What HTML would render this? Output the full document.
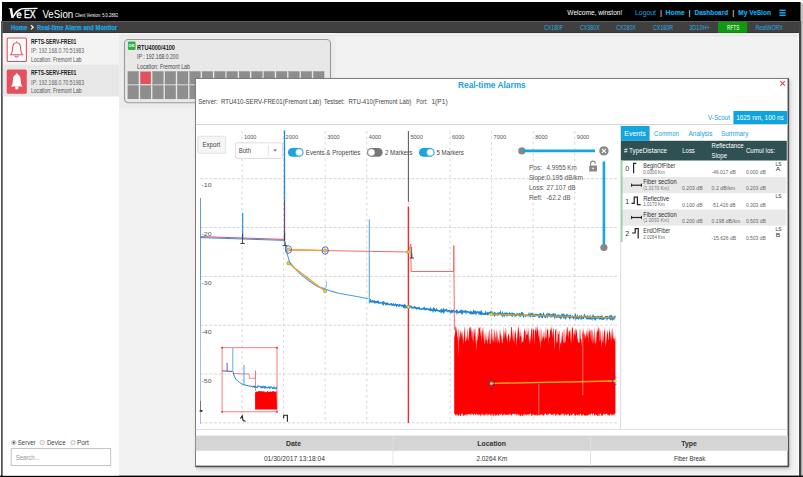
<!DOCTYPE html>
<html><head><meta charset="utf-8"><style>
html,body{margin:0;padding:0;width:803px;height:477px;overflow:hidden;background:#fff}
svg{display:block}
text{font-family:"Liberation Sans", sans-serif}
</style></head><body>
<svg width="803" height="477" viewBox="0 0 803 477">
<defs><filter id="blur" x="-5%" y="-5%" width="110%" height="110%"><feGaussianBlur stdDeviation="2"/></filter></defs>
<rect x="0" y="0" width="803" height="477" fill="#ffffff" />
<rect x="801" y="3" width="2" height="474" fill="#c4c4c4" />
<rect x="2" y="2" width="798" height="474" fill="#f2f2f2" />
<rect x="2" y="2" width="798.6" height="19.5" fill="#000000" />
<rect x="2" y="21.5" width="798" height="11.7" fill="#404040" />
<rect x="2" y="32.2" width="798" height="1" fill="#353535" />
<rect x="1" y="21" width="2" height="455" fill="#575757" />
<rect x="798" y="33" width="1" height="443" fill="#ffffff" />
<rect x="799" y="21" width="2.2" height="455" fill="#444444" />
<rect x="0" y="475.6" width="803" height="1.4" fill="#000000" />
<path d="M8.3,8.2 L12.4,8.2 L12.3,9.0 L13.2,15.4 C15.2,11.6 17.8,8.4 23.5,7.9 L37.6,7.7 L37.6,8.9 L23.6,9.2 C18.8,9.8 15.8,13.6 13.4,18.0 L11.4,18.0 L9.7,9.2 Z" stroke="none" stroke-width="1" fill="#fff" />
<path d="M17.3,15.2 L21.1,15.2 C21.1,13.7 20.3,12.9 19.1,12.9 C17.9,12.9 17.1,14 17.1,15.3 C17.1,16.7 18,17.6 19.2,17.6 C20,17.6 20.6,17.3 21,16.8" stroke="#fff" stroke-width="1.2" fill="none" />
<text x="23.9" y="17.92" font-size="10.6" fill="#fff" textLength="11.6" lengthAdjust="spacingAndGlyphs" stroke="#fff" stroke-width="0.35">EX</text>
<text x="42.4" y="17.82" font-size="10.6" fill="#fff" textLength="30.8" lengthAdjust="spacingAndGlyphs" >VeSion</text>
<text x="75" y="16.66" font-size="4.6" fill="#fff" textLength="43" lengthAdjust="spacingAndGlyphs" >Client Version: 5.0.2882</text>
<text x="11" y="30.04" font-size="7.6" fill="#1aa6e4" font-weight="bold" textLength="16.4" lengthAdjust="spacingAndGlyphs" stroke="#1aa6e4" stroke-width="0.25">Home</text>
<path d="M31,25.2 L33.2,27.3 L31,29.4" stroke="#f0f0f0" stroke-width="1.3" fill="none" />
<text x="37.1" y="30.04" font-size="7.6" fill="#1aa6e4" font-weight="bold" textLength="80" lengthAdjust="spacingAndGlyphs" stroke="#1aa6e4" stroke-width="0.25">Real-time Alarm and Monitor</text>
<text x="567.3" y="15.41" font-size="7.8" fill="#fff" textLength="55" lengthAdjust="spacingAndGlyphs" >Welcome, winston!</text>
<text x="635" y="15.41" font-size="7.8" fill="#1aa8e6" textLength="21" lengthAdjust="spacingAndGlyphs" >Logout</text>
<text x="660.0" y="15.41" font-size="7.8" fill="#fff" >|</text>
<text x="665.5" y="15.41" font-size="7.8" fill="#1aa8e6" font-weight="bold" textLength="19.2" lengthAdjust="spacingAndGlyphs" stroke="#1aa8e6" stroke-width="0.2">Home</text>
<text x="688.6" y="15.41" font-size="7.8" fill="#fff" >|</text>
<text x="694.6" y="15.41" font-size="7.8" fill="#1aa8e6" font-weight="bold" textLength="33.5" lengthAdjust="spacingAndGlyphs" stroke="#1aa8e6" stroke-width="0.2">Dashboard</text>
<text x="732.2" y="15.41" font-size="7.8" fill="#fff" >|</text>
<text x="738.3" y="15.41" font-size="7.8" fill="#1aa8e6" font-weight="bold" textLength="32.6" lengthAdjust="spacingAndGlyphs" stroke="#1aa8e6" stroke-width="0.2">My VeSion</text>
<rect x="779.4" y="9.6" width="6.2" height="1.5" fill="#1aa8e6" />
<rect x="779.4" y="12.1" width="6.2" height="1.5" fill="#1aa8e6" />
<rect x="779.4" y="14.6" width="6.2" height="1.5" fill="#1aa8e6" />
<rect x="718" y="21.8" width="29.2" height="11" fill="#119a11" />
<text x="544" y="30.12" font-size="7.0" fill="#2aaae2" textLength="19.1" lengthAdjust="spacingAndGlyphs" >CX180F</text>
<text x="580" y="30.12" font-size="7.0" fill="#2aaae2" textLength="19.7" lengthAdjust="spacingAndGlyphs" >CX380X</text>
<text x="616.3" y="30.12" font-size="7.0" fill="#2aaae2" textLength="19.5" lengthAdjust="spacingAndGlyphs" >CX280X</text>
<text x="652.9" y="30.12" font-size="7.0" fill="#2aaae2" textLength="20.2" lengthAdjust="spacingAndGlyphs" >CX180R</text>
<text x="689.3" y="30.12" font-size="7.0" fill="#2aaae2" textLength="20.4" lengthAdjust="spacingAndGlyphs" >3D10H+</text>
<text x="727.1" y="30.12" font-size="7.0" fill="#fff" textLength="12.2" lengthAdjust="spacingAndGlyphs" >RFTS</text>
<text x="755.5" y="30.12" font-size="7.0" fill="#2aaae2" textLength="27.4" lengthAdjust="spacingAndGlyphs" >RealWORX</text>
<rect x="2.8" y="33" width="116.2" height="442.6" fill="#ffffff" />
<rect x="2.8" y="33" width="116.2" height="31.5" fill="#f3f3f3" />
<rect x="2.8" y="64.5" width="116.2" height="32" fill="#e7e7e7" />
<rect x="7.2" y="38" width="19.2" height="23.5" fill="#fff" stroke="#e3505e" stroke-width="1.1" rx="1" />
<rect x="6.7" y="69.4" width="20.1" height="24.4" fill="#e3505e" rx="1.5" />
<path d="M10.600000000000001,54.8 L22.6,54.8 C21.0,53.199999999999996 20.6,51.4 20.6,48.599999999999994 C20.6,44.8 18.8,42.8 16.6,42.8 C14.400000000000002,42.8 12.600000000000001,44.8 12.600000000000001,48.599999999999994 C12.600000000000001,51.4 12.200000000000001,53.199999999999996 10.600000000000001,54.8 Z" stroke="#e3505e" stroke-width="1.1" fill="none" />
<path d="M15.000000000000002,55.4 a1.6,1.6 0 0,0 3.2,0" stroke="#e3505e" stroke-width="1.1" fill="none" />
<line x1="16.6" y1="42.8" x2="16.6" y2="41.5" stroke="#e3505e" stroke-width="1.1" />
<path d="M10.8,86.6 L22.8,86.6 C21.200000000000003,85.0 20.8,83.19999999999999 20.8,80.39999999999999 C20.8,76.6 19.0,74.6 16.8,74.6 C14.600000000000001,74.6 12.8,76.6 12.8,80.39999999999999 C12.8,83.19999999999999 12.4,85.0 10.8,86.6 Z" stroke="none" stroke-width="1" fill="#fff" />
<circle cx="16.8" cy="87.89999999999999" r="1.7" fill="#fff" />
<circle cx="16.8" cy="74.3" r="1.0" fill="#fff" />
<text x="31" y="43.78" font-size="6.6" fill="#222" font-weight="bold" textLength="45.3" lengthAdjust="spacingAndGlyphs" >RFTS-SERV-FRE01</text>
<text x="31" y="53.27" font-size="6.3" fill="#666" textLength="53" lengthAdjust="spacingAndGlyphs" >IP: 192.168.0.70:51983</text>
<text x="31" y="62.17" font-size="6.3" fill="#555" textLength="50.5" lengthAdjust="spacingAndGlyphs" >Location: Fremont Lab</text>
<text x="31" y="75.18" font-size="6.6" fill="#222" font-weight="bold" textLength="45.3" lengthAdjust="spacingAndGlyphs" >RFTS-SERV-FRE01</text>
<text x="31" y="84.77" font-size="6.3" fill="#666" textLength="53" lengthAdjust="spacingAndGlyphs" >IP: 192.168.0.70:51983</text>
<text x="31" y="93.47" font-size="6.3" fill="#555" textLength="50.5" lengthAdjust="spacingAndGlyphs" >Location: Fremont Lab</text>
<circle cx="13.8" cy="442.6" r="2.2" fill="#f4f4f4" stroke="#aaa" stroke-width="0.7" />
<text x="17.8" y="444.98" font-size="6.6" fill="#444" textLength="17.8" lengthAdjust="spacingAndGlyphs" >Server</text>
<circle cx="42.2" cy="442.6" r="2.2" fill="#f4f4f4" stroke="#aaa" stroke-width="0.7" />
<text x="47" y="444.98" font-size="6.6" fill="#444" textLength="18.5" lengthAdjust="spacingAndGlyphs" >Device</text>
<circle cx="72.9" cy="442.6" r="2.2" fill="#f4f4f4" stroke="#aaa" stroke-width="0.7" />
<text x="76.9" y="444.98" font-size="6.6" fill="#444" textLength="11.8" lengthAdjust="spacingAndGlyphs" >Port</text>
<circle cx="13.8" cy="442.6" r="1.1" fill="#444" />
<rect x="11.2" y="448.6" width="99.5" height="16.9" fill="#fff" stroke="#bdbdbd" stroke-width="0.9" />
<text x="15.7" y="459.65" font-size="6.8" fill="#999" textLength="24" lengthAdjust="spacingAndGlyphs" >Search...</text>
<rect x="119" y="33" width="216.4" height="75.5" fill="#ececec" />
<rect x="119" y="33.2" width="680" height="1.3" fill="#f7f7f7" />
<rect x="119" y="34.8" width="680" height="1.6" fill="#e7e7e7" />
<rect x="124.5" y="39.5" width="206" height="63.2" fill="#e8e8e8" stroke="#999999" stroke-width="1.1" rx="4" />
<rect x="127.9" y="41.5" width="7.7" height="8.5" fill="#2db24a" rx="1.2" />
<text x="128.6" y="47.31" font-size="4.2" fill="#fff" font-weight="bold" textLength="6" lengthAdjust="spacingAndGlyphs" >OK</text>
<text x="137" y="49.58" font-size="6.6" fill="#222" font-weight="bold" textLength="38" lengthAdjust="spacingAndGlyphs" >RTU4000/4100</text>
<text x="137" y="59.47" font-size="6.3" fill="#484848" textLength="41.5" lengthAdjust="spacingAndGlyphs" >IP : 192.168.0.200</text>
<text x="137" y="68.67" font-size="6.3" fill="#484848" textLength="53" lengthAdjust="spacingAndGlyphs" >Location: Fremont Lab</text>
<rect x="127.9" y="71.5" width="10.6" height="12.6" fill="#8e8e8e" stroke="#7a7a7a" stroke-width="0.3" />
<rect x="140.27" y="71.5" width="10.6" height="12.6" fill="#e3505e" />
<rect x="152.64" y="71.5" width="10.6" height="12.6" fill="#8e8e8e" stroke="#7a7a7a" stroke-width="0.3" />
<rect x="165.01" y="71.5" width="10.6" height="12.6" fill="#8e8e8e" stroke="#7a7a7a" stroke-width="0.3" />
<rect x="177.38" y="71.5" width="10.6" height="12.6" fill="#8e8e8e" stroke="#7a7a7a" stroke-width="0.3" />
<rect x="189.75" y="71.5" width="10.6" height="12.6" fill="#8e8e8e" stroke="#7a7a7a" stroke-width="0.3" />
<rect x="202.12" y="71.5" width="10.6" height="12.6" fill="#8e8e8e" stroke="#7a7a7a" stroke-width="0.3" />
<rect x="214.49" y="71.5" width="10.6" height="12.6" fill="#8e8e8e" stroke="#7a7a7a" stroke-width="0.3" />
<rect x="226.86" y="71.5" width="10.6" height="12.6" fill="#8e8e8e" stroke="#7a7a7a" stroke-width="0.3" />
<rect x="239.23" y="71.5" width="10.6" height="12.6" fill="#8e8e8e" stroke="#7a7a7a" stroke-width="0.3" />
<rect x="251.6" y="71.5" width="10.6" height="12.6" fill="#8e8e8e" stroke="#7a7a7a" stroke-width="0.3" />
<rect x="263.97" y="71.5" width="10.6" height="12.6" fill="#8e8e8e" stroke="#7a7a7a" stroke-width="0.3" />
<rect x="276.34" y="71.5" width="10.6" height="12.6" fill="#8e8e8e" stroke="#7a7a7a" stroke-width="0.3" />
<rect x="288.71" y="71.5" width="10.6" height="12.6" fill="#8e8e8e" stroke="#7a7a7a" stroke-width="0.3" />
<rect x="301.08" y="71.5" width="10.6" height="12.6" fill="#8e8e8e" stroke="#7a7a7a" stroke-width="0.3" />
<rect x="313.45" y="71.5" width="10.6" height="12.6" fill="#8e8e8e" stroke="#7a7a7a" stroke-width="0.3" />
<rect x="127.9" y="85.5" width="10.6" height="13.4" fill="#8e8e8e" stroke="#7a7a7a" stroke-width="0.3" />
<rect x="140.27" y="85.5" width="10.6" height="13.4" fill="#8e8e8e" stroke="#7a7a7a" stroke-width="0.3" />
<rect x="152.64" y="85.5" width="10.6" height="13.4" fill="#8e8e8e" stroke="#7a7a7a" stroke-width="0.3" />
<rect x="165.01" y="85.5" width="10.6" height="13.4" fill="#8e8e8e" stroke="#7a7a7a" stroke-width="0.3" />
<rect x="177.38" y="85.5" width="10.6" height="13.4" fill="#8e8e8e" stroke="#7a7a7a" stroke-width="0.3" />
<rect x="189.75" y="85.5" width="10.6" height="13.4" fill="#8e8e8e" stroke="#7a7a7a" stroke-width="0.3" />
<rect x="202.12" y="85.5" width="10.6" height="13.4" fill="#8e8e8e" stroke="#7a7a7a" stroke-width="0.3" />
<rect x="214.49" y="85.5" width="10.6" height="13.4" fill="#8e8e8e" stroke="#7a7a7a" stroke-width="0.3" />
<rect x="226.86" y="85.5" width="10.6" height="13.4" fill="#8e8e8e" stroke="#7a7a7a" stroke-width="0.3" />
<rect x="239.23" y="85.5" width="10.6" height="13.4" fill="#8e8e8e" stroke="#7a7a7a" stroke-width="0.3" />
<rect x="251.6" y="85.5" width="10.6" height="13.4" fill="#8e8e8e" stroke="#7a7a7a" stroke-width="0.3" />
<rect x="263.97" y="85.5" width="10.6" height="13.4" fill="#8e8e8e" stroke="#7a7a7a" stroke-width="0.3" />
<rect x="276.34" y="85.5" width="10.6" height="13.4" fill="#8e8e8e" stroke="#7a7a7a" stroke-width="0.3" />
<rect x="288.71" y="85.5" width="10.6" height="13.4" fill="#8e8e8e" stroke="#7a7a7a" stroke-width="0.3" />
<rect x="301.08" y="85.5" width="10.6" height="13.4" fill="#8e8e8e" stroke="#7a7a7a" stroke-width="0.3" />
<rect x="313.45" y="85.5" width="10.6" height="13.4" fill="#8e8e8e" stroke="#7a7a7a" stroke-width="0.3" />
<rect x="197" y="80" width="593" height="389" fill="#000" opacity="0.18" filter="url(#blur)"/>
<rect x="195.5" y="78.5" width="592.8" height="387.8" fill="#ffffff" stroke="#7c7c7c" stroke-width="1.0" />
<line x1="788.4" y1="78.5" x2="788.4" y2="467" stroke="#4e4e4e" stroke-width="1.5" />
<line x1="195.5" y1="466.4" x2="789" y2="466.4" stroke="#4e4e4e" stroke-width="1.5" />
<text x="458" y="87.90" font-size="8.6" fill="#19a2de" font-weight="bold" textLength="67.7" lengthAdjust="spacingAndGlyphs" >Real-time Alarms</text>
<path d="M780.4,81.2 L784.8,85.6 M784.8,81.2 L780.4,85.6" stroke="#d9454f" stroke-width="1.1" fill="none" />
<text x="198.2" y="103.92" font-size="7.0" fill="#444" textLength="19.5" lengthAdjust="spacingAndGlyphs" >Server:</text>
<text x="220.9" y="103.92" font-size="7.0" fill="#444" textLength="100.4" lengthAdjust="spacingAndGlyphs" >RTU410-SERV-FRE01(Fremont Lab)</text>
<text x="323.9" y="103.92" font-size="7.0" fill="#444" textLength="20.7" lengthAdjust="spacingAndGlyphs" >Testset:</text>
<text x="348.5" y="103.92" font-size="7.0" fill="#444" textLength="62.8" lengthAdjust="spacingAndGlyphs" >RTU-410(Fremont Lab)</text>
<text x="416.2" y="103.92" font-size="7.0" fill="#444" textLength="11.3" lengthAdjust="spacingAndGlyphs" >Port:</text>
<text x="431.4" y="103.92" font-size="7.0" fill="#444" textLength="16.2" lengthAdjust="spacingAndGlyphs" >1(P1)</text>
<text x="708" y="119.89" font-size="7.2" fill="#19a2de" textLength="22" lengthAdjust="spacingAndGlyphs" >V-Scout</text>
<rect x="733.4" y="111" width="54" height="13.3" fill="#0ea5df" />
<text x="736.2" y="120.12" font-size="7.0" fill="#fff" textLength="47.6" lengthAdjust="spacingAndGlyphs" >1625 nm, 100 ns</text>
<line x1="195.8" y1="124.5" x2="788" y2="124.5" stroke="#d6d6d6" stroke-width="1" />
<line x1="242.0" y1="131" x2="242.0" y2="423" stroke="#d2d2d2" stroke-width="0.9" stroke-dasharray="2.6,2.9"/>
<line x1="283.6" y1="131" x2="283.6" y2="423" stroke="#d2d2d2" stroke-width="0.9" stroke-dasharray="2.6,2.9"/>
<line x1="325.2" y1="131" x2="325.2" y2="423" stroke="#d2d2d2" stroke-width="0.9" stroke-dasharray="2.6,2.9"/>
<line x1="366.8" y1="131" x2="366.8" y2="423" stroke="#d2d2d2" stroke-width="0.9" stroke-dasharray="2.6,2.9"/>
<line x1="408.4" y1="131" x2="408.4" y2="423" stroke="#d2d2d2" stroke-width="0.9" stroke-dasharray="2.6,2.9"/>
<line x1="450.0" y1="131" x2="450.0" y2="423" stroke="#d2d2d2" stroke-width="0.9" stroke-dasharray="2.6,2.9"/>
<line x1="491.6" y1="131" x2="491.6" y2="423" stroke="#d2d2d2" stroke-width="0.9" stroke-dasharray="2.6,2.9"/>
<line x1="533.2" y1="131" x2="533.2" y2="423" stroke="#d2d2d2" stroke-width="0.9" stroke-dasharray="2.6,2.9"/>
<line x1="574.8" y1="131" x2="574.8" y2="423" stroke="#d2d2d2" stroke-width="0.9" stroke-dasharray="2.6,2.9"/>
<line x1="200.1" y1="178.7" x2="617" y2="178.7" stroke="#d2d2d2" stroke-width="0.9" stroke-dasharray="3,1.6"/>
<line x1="200.1" y1="227.53" x2="617" y2="227.53" stroke="#d2d2d2" stroke-width="0.9" stroke-dasharray="3,1.6"/>
<line x1="200.1" y1="276.36" x2="617" y2="276.36" stroke="#d2d2d2" stroke-width="0.9" stroke-dasharray="3,1.6"/>
<line x1="200.1" y1="325.19" x2="617" y2="325.19" stroke="#d2d2d2" stroke-width="0.9" stroke-dasharray="3,1.6"/>
<line x1="200.1" y1="374.02" x2="617" y2="374.02" stroke="#d2d2d2" stroke-width="0.9" stroke-dasharray="3,1.6"/>
<line x1="200.1" y1="422.85" x2="617" y2="422.85" stroke="#d2d2d2" stroke-width="0.9" stroke-dasharray="3,1.6"/>
<text x="244.0" y="138.63" font-size="6.2" fill="#555" textLength="12.4" lengthAdjust="spacingAndGlyphs" >1000</text>
<text x="285.6" y="138.63" font-size="6.2" fill="#555" textLength="12.4" lengthAdjust="spacingAndGlyphs" >2000</text>
<text x="327.2" y="138.63" font-size="6.2" fill="#555" textLength="12.4" lengthAdjust="spacingAndGlyphs" >3000</text>
<text x="368.8" y="138.63" font-size="6.2" fill="#555" textLength="12.4" lengthAdjust="spacingAndGlyphs" >4000</text>
<text x="410.4" y="138.63" font-size="6.2" fill="#555" textLength="12.4" lengthAdjust="spacingAndGlyphs" >5000</text>
<text x="452.0" y="138.63" font-size="6.2" fill="#555" textLength="12.4" lengthAdjust="spacingAndGlyphs" >6000</text>
<text x="493.6" y="138.63" font-size="6.2" fill="#555" textLength="12.4" lengthAdjust="spacingAndGlyphs" >7000</text>
<text x="535.2" y="138.63" font-size="6.2" fill="#555" textLength="12.4" lengthAdjust="spacingAndGlyphs" >8000</text>
<text x="576.8" y="138.63" font-size="6.2" fill="#555" textLength="12.4" lengthAdjust="spacingAndGlyphs" >9000</text>
<text x="201.5" y="187.33" font-size="6.2" fill="#555" textLength="10" lengthAdjust="spacingAndGlyphs" >-10</text>
<text x="201.5" y="236.16" font-size="6.2" fill="#555" textLength="10" lengthAdjust="spacingAndGlyphs" >-20</text>
<text x="201.5" y="284.99" font-size="6.2" fill="#555" textLength="10" lengthAdjust="spacingAndGlyphs" >-30</text>
<text x="201.5" y="333.82" font-size="6.2" fill="#555" textLength="10" lengthAdjust="spacingAndGlyphs" >-40</text>
<text x="201.5" y="382.65" font-size="6.2" fill="#555" textLength="10" lengthAdjust="spacingAndGlyphs" >-50</text>
<rect x="197.7" y="136.2" width="27.9" height="17.2" fill="#f5f5f5" stroke="#dcdcdc" stroke-width="0.8" rx="1" />
<text x="202.4" y="147.15" font-size="6.8" fill="#444" textLength="17.8" lengthAdjust="spacingAndGlyphs" >Export</text>
<rect x="235.7" y="142.8" width="46.7" height="15.6" fill="#fff" stroke="#d2d2d2" stroke-width="0.8" rx="1" />
<text x="238.8" y="153.05" font-size="6.8" fill="#444" textLength="12.2" lengthAdjust="spacingAndGlyphs" >Both</text>
<line x1="268.3" y1="145" x2="268.3" y2="156" stroke="#dddddd" stroke-width="0.8" />
<path d="M273.2,149.4 L277,149.4 L275.1,151.6 Z" stroke="none" stroke-width="1" fill="#666" />
<rect x="287.9" y="148.0" width="15.6" height="8.8" fill="#1aa3dc" rx="4.4" />
<circle cx="299.1" cy="152.4" r="3.6000000000000005" fill="#fff" stroke="#1aa3dc" stroke-width="0.5" />
<text x="305.8" y="154.88" font-size="6.9" fill="#444" textLength="54.5" lengthAdjust="spacingAndGlyphs" >Events &amp; Properties</text>
<rect x="367" y="148.0" width="15.6" height="8.8" fill="#777" rx="4.4" />
<circle cx="371.4" cy="152.4" r="3.6000000000000005" fill="#fff" stroke="#777" stroke-width="0.5" />
<text x="385" y="154.88" font-size="6.9" fill="#444" textLength="27.3" lengthAdjust="spacingAndGlyphs" >2 Markers</text>
<rect x="419" y="148.0" width="15.6" height="8.8" fill="#1aa3dc" rx="4.4" />
<circle cx="430.20000000000005" cy="152.4" r="3.6000000000000005" fill="#fff" stroke="#1aa3dc" stroke-width="0.5" />
<text x="436.5" y="154.88" font-size="6.9" fill="#444" textLength="27.3" lengthAdjust="spacingAndGlyphs" >5 Markers</text>
<path d="M454.2,331.2 L454.6,337.6 L455.0,335.3 L455.4,326.7 L455.8,326.4 L456.2,326.9 L456.6,333.1 L457.0,327.7 L457.4,337.1 L457.8,336.1 L458.2,356.5 L458.6,330.6 L459.0,327.6 L459.4,341.0 L459.8,336.2 L460.2,332.1 L460.6,329.7 L461.0,338.2 L461.4,331.0 L461.8,333.6 L462.2,340.6 L462.6,329.8 L463.0,335.1 L463.4,339.2 L463.8,344.6 L464.2,333.0 L464.6,328.2 L465.0,326.5 L465.4,340.0 L465.8,342.3 L466.2,338.5 L466.6,336.2 L467.0,341.5 L467.4,334.1 L467.8,326.8 L468.2,337.5 L468.6,341.2 L469.0,332.4 L469.4,326.2 L469.8,328.4 L470.2,326.7 L470.6,327.8 L471.0,332.5 L471.4,327.0 L471.8,335.5 L472.2,341.1 L472.6,330.4 L473.0,331.8 L473.4,344.1 L473.8,328.6 L474.2,329.6 L474.6,336.3 L475.0,326.0 L475.4,332.0 L475.8,344.0 L476.2,334.9 L476.6,350.7 L477.0,340.3 L477.4,340.7 L477.8,332.6 L478.2,337.3 L478.6,326.9 L479.0,328.3 L479.4,328.8 L479.8,327.4 L480.2,326.3 L480.6,336.8 L481.0,329.9 L481.4,331.9 L481.8,341.7 L482.2,333.9 L482.6,327.1 L483.0,331.5 L483.4,341.3 L483.8,326.2 L484.2,335.1 L484.6,342.8 L485.0,344.5 L485.4,338.5 L485.8,332.0 L486.2,340.1 L486.6,340.3 L487.0,329.4 L487.4,344.7 L487.8,340.8 L488.2,339.4 L488.6,334.9 L489.0,330.2 L489.4,330.0 L489.8,344.1 L490.2,343.6 L490.6,344.0 L491.0,329.3 L491.4,328.9 L491.8,337.0 L492.2,341.6 L492.6,337.6 L493.0,327.1 L493.4,343.0 L493.8,339.7 L494.2,328.6 L494.6,331.4 L495.0,344.4 L495.4,332.7 L495.8,339.1 L496.2,327.8 L496.6,342.9 L497.0,328.1 L497.4,344.6 L497.8,331.7 L498.2,341.4 L498.6,337.6 L499.0,343.6 L499.4,342.2 L499.8,329.2 L500.2,330.6 L500.6,336.3 L501.0,333.0 L501.4,343.0 L501.8,333.7 L502.2,342.9 L502.6,343.2 L503.0,335.2 L503.4,326.2 L503.8,339.9 L504.2,328.5 L504.6,339.1 L505.0,331.2 L505.4,335.7 L505.8,327.4 L506.2,329.8 L506.6,340.1 L507.0,335.8 L507.4,343.1 L507.8,336.8 L508.2,334.8 L508.6,333.6 L509.0,334.1 L509.4,338.6 L509.8,343.7 L510.2,335.7 L510.6,341.5 L511.0,327.7 L511.4,326.9 L511.8,326.9 L512.2,340.4 L512.6,328.2 L513.0,337.8 L513.4,342.5 L513.8,329.3 L514.2,332.6 L514.6,344.8 L515.0,328.3 L515.4,334.9 L515.8,328.9 L516.2,346.8 L516.6,338.0 L517.0,337.0 L517.4,326.8 L517.8,340.5 L518.2,327.4 L518.6,326.5 L519.0,330.2 L519.4,333.0 L519.8,341.1 L520.2,328.1 L520.6,336.0 L521.0,336.8 L521.4,333.1 L521.8,343.7 L522.2,340.7 L522.6,341.9 L523.0,342.0 L523.4,331.5 L523.8,343.4 L524.2,327.8 L524.6,329.7 L525.0,331.2 L525.4,331.0 L525.8,339.8 L526.2,334.6 L526.6,335.1 L527.0,326.2 L527.4,335.6 L527.8,334.1 L528.2,327.4 L528.6,333.2 L529.0,341.4 L529.4,334.7 L529.8,344.6 L530.2,341.4 L530.6,337.3 L531.0,333.5 L531.4,326.9 L531.8,330.0 L532.2,327.1 L532.6,342.2 L533.0,330.4 L533.4,330.6 L533.8,328.3 L534.2,330.1 L534.6,344.4 L535.0,329.8 L535.4,330.9 L535.8,326.0 L536.2,334.1 L536.6,329.0 L537.0,326.0 L537.4,327.2 L537.8,330.8 L538.2,329.6 L538.6,335.1 L539.0,337.7 L539.4,342.4 L539.8,331.2 L540.2,328.1 L540.6,349.1 L541.0,342.7 L541.4,339.3 L541.8,328.0 L542.2,334.6 L542.6,340.8 L543.0,336.2 L543.4,338.3 L543.8,331.4 L544.2,331.9 L544.6,341.5 L545.0,337.1 L545.4,338.2 L545.8,326.0 L546.2,339.6 L546.6,335.3 L547.0,326.8 L547.4,329.9 L547.8,330.1 L548.2,329.1 L548.6,344.5 L549.0,332.3 L549.4,338.3 L549.8,336.9 L550.2,327.0 L550.6,329.9 L551.0,330.8 L551.4,326.1 L551.8,330.2 L552.2,338.4 L552.6,330.6 L553.0,333.9 L553.4,327.6 L553.8,329.0 L554.2,350.0 L554.6,341.1 L555.0,333.6 L555.4,329.2 L555.8,329.2 L556.2,328.0 L556.6,344.0 L557.0,341.1 L557.4,342.5 L557.8,329.5 L558.2,334.3 L558.6,334.4 L559.0,330.8 L559.4,331.6 L559.8,352.1 L560.2,341.5 L560.6,343.4 L561.0,342.9 L561.4,332.1 L561.8,345.0 L562.2,331.9 L562.6,331.7 L563.0,341.4 L563.4,343.6 L563.8,330.1 L564.2,328.8 L564.6,344.0 L565.0,341.0 L565.4,343.1 L565.8,335.5 L566.2,326.6 L566.6,333.6 L567.0,337.5 L567.4,326.6 L567.8,327.8 L568.2,331.6 L568.6,339.4 L569.0,330.0 L569.4,330.8 L569.8,332.5 L570.2,328.3 L570.6,343.0 L571.0,329.3 L571.4,344.9 L571.8,328.0 L572.2,327.2 L572.6,327.2 L573.0,330.0 L573.4,342.6 L573.8,332.9 L574.2,335.0 L574.6,331.5 L575.0,330.4 L575.4,327.8 L575.8,337.2 L576.2,329.3 L576.6,329.8 L577.0,333.5 L577.4,341.7 L577.8,336.2 L578.2,342.7 L578.6,341.8 L579.0,343.4 L579.4,341.9 L579.8,329.8 L580.2,328.2 L580.6,338.2 L581.0,339.1 L581.4,340.0 L581.8,346.5 L582.2,329.6 L582.6,337.5 L583.0,327.8 L583.4,337.3 L583.8,327.5 L584.2,335.0 L584.6,332.4 L585.0,340.8 L585.4,333.8 L585.8,337.5 L586.2,334.1 L586.6,329.8 L587.0,338.7 L587.4,326.2 L587.8,338.1 L588.2,330.0 L588.6,343.4 L589.0,326.4 L589.4,333.0 L589.8,329.0 L590.2,339.4 L590.6,329.1 L591.0,331.0 L591.4,329.5 L591.8,339.9 L592.2,344.0 L592.6,328.8 L593.0,332.9 L593.4,343.9 L593.8,332.5 L594.2,344.4 L594.6,326.6 L595.0,332.5 L595.4,342.5 L595.8,344.9 L596.2,331.3 L596.6,343.6 L597.0,326.4 L597.4,332.2 L597.8,331.3 L598.2,326.0 L598.6,331.7 L599.0,327.7 L599.4,329.1 L599.8,341.2 L600.2,339.9 L600.6,332.1 L601.0,328.9 L601.4,348.5 L601.8,340.9 L602.2,327.4 L602.6,343.3 L603.0,339.6 L603.4,331.5 L603.8,344.1 L604.2,330.1 L604.6,331.1 L605.0,326.0 L605.4,343.2 L605.8,347.0 L606.2,334.1 L606.6,344.0 L607.0,329.9 L607.4,334.4 L607.8,328.7 L608.2,339.4 L608.6,340.1 L609.0,331.3 L609.4,331.9 L609.8,327.0 L610.2,339.7 L610.6,334.6 L611.0,331.2 L611.4,342.5 L611.8,330.1 L612.2,327.3 L612.6,338.8 L613.0,329.6 L613.4,337.0 L613.8,339.6 L614.2,337.9 L614.6,341.6 L615.0,335.9 L615.4,339.4 L615.4,413.8 L615.0,413.2 L614.6,413.7 L614.2,415.8 L613.8,413.5 L613.4,416.0 L613.0,413.9 L612.6,414.9 L612.2,415.5 L611.8,414.3 L611.4,415.7 L611.0,414.6 L610.6,414.5 L610.2,413.3 L609.8,415.2 L609.4,415.9 L609.0,414.8 L608.6,416.3 L608.2,414.2 L607.8,414.4 L607.4,415.5 L607.0,414.1 L606.6,414.0 L606.2,413.3 L605.8,414.6 L605.4,414.2 L605.0,413.9 L604.6,415.6 L604.2,413.5 L603.8,413.5 L603.4,414.1 L603.0,415.2 L602.6,415.8 L602.2,415.2 L601.8,415.8 L601.4,415.9 L601.0,413.3 L600.6,413.6 L600.2,413.9 L599.8,413.5 L599.4,416.2 L599.0,416.1 L598.6,416.0 L598.2,413.4 L597.8,416.1 L597.4,415.8 L597.0,415.8 L596.6,414.4 L596.2,415.1 L595.8,413.4 L595.4,415.6 L595.0,415.4 L594.6,415.2 L594.2,415.4 L593.8,413.3 L593.4,413.3 L593.0,413.7 L592.6,414.3 L592.2,416.2 L591.8,413.5 L591.4,413.3 L591.0,413.7 L590.6,416.1 L590.2,413.4 L589.8,415.2 L589.4,413.9 L589.0,414.2 L588.6,415.0 L588.2,415.5 L587.8,414.6 L587.4,415.9 L587.0,415.4 L586.6,415.9 L586.2,414.7 L585.8,416.3 L585.4,415.3 L585.0,415.4 L584.6,415.2 L584.2,416.1 L583.8,414.0 L583.4,414.3 L583.0,416.0 L582.6,414.2 L582.2,415.6 L581.8,416.2 L581.4,415.6 L581.0,414.0 L580.6,414.0 L580.2,413.2 L579.8,416.0 L579.4,413.9 L579.0,416.3 L578.6,415.3 L578.2,414.0 L577.8,414.9 L577.4,415.7 L577.0,414.6 L576.6,415.0 L576.2,414.1 L575.8,415.5 L575.4,415.9 L575.0,415.4 L574.6,415.6 L574.2,414.3 L573.8,413.3 L573.4,413.9 L573.0,413.5 L572.6,413.9 L572.2,414.6 L571.8,415.6 L571.4,414.7 L571.0,415.6 L570.6,415.9 L570.2,413.2 L569.8,415.5 L569.4,415.7 L569.0,416.0 L568.6,413.4 L568.2,414.2 L567.8,414.2 L567.4,413.8 L567.0,415.8 L566.6,415.3 L566.2,414.8 L565.8,415.1 L565.4,413.8 L565.0,413.7 L564.6,416.2 L564.2,415.0 L563.8,413.2 L563.4,415.7 L563.0,413.4 L562.6,414.0 L562.2,414.5 L561.8,414.9 L561.4,413.3 L561.0,416.1 L560.6,414.0 L560.2,415.5 L559.8,416.2 L559.4,414.6 L559.0,415.3 L558.6,414.3 L558.2,415.0 L557.8,415.3 L557.4,413.2 L557.0,414.0 L556.6,414.5 L556.2,415.7 L555.8,416.0 L555.4,415.2 L555.0,413.5 L554.6,413.7 L554.2,414.0 L553.8,416.2 L553.4,413.6 L553.0,414.7 L552.6,415.2 L552.2,413.9 L551.8,415.1 L551.4,415.1 L551.0,413.9 L550.6,414.3 L550.2,413.5 L549.8,414.3 L549.4,413.2 L549.0,413.3 L548.6,415.3 L548.2,413.9 L547.8,413.6 L547.4,416.1 L547.0,414.8 L546.6,414.6 L546.2,415.2 L545.8,413.7 L545.4,413.3 L545.0,413.2 L544.6,414.2 L544.2,415.3 L543.8,415.1 L543.4,416.3 L543.0,415.2 L542.6,414.0 L542.2,415.8 L541.8,413.4 L541.4,415.6 L541.0,413.8 L540.6,414.6 L540.2,415.6 L539.8,414.4 L539.4,415.0 L539.0,416.4 L538.6,414.0 L538.2,415.8 L537.8,414.5 L537.4,415.2 L537.0,416.4 L536.6,413.5 L536.2,416.0 L535.8,415.1 L535.4,415.0 L535.0,416.0 L534.6,414.4 L534.2,415.2 L533.8,414.9 L533.4,413.6 L533.0,415.7 L532.6,413.7 L532.2,416.1 L531.8,415.4 L531.4,416.2 L531.0,413.7 L530.6,413.8 L530.2,413.3 L529.8,414.2 L529.4,414.8 L529.0,414.0 L528.6,413.9 L528.2,416.1 L527.8,414.8 L527.4,413.7 L527.0,415.8 L526.6,414.1 L526.2,416.1 L525.8,413.7 L525.4,415.6 L525.0,414.3 L524.6,413.4 L524.2,416.2 L523.8,415.7 L523.4,413.7 L523.0,416.1 L522.6,416.3 L522.2,414.8 L521.8,416.3 L521.4,413.8 L521.0,415.8 L520.6,415.5 L520.2,416.4 L519.8,415.9 L519.4,413.6 L519.0,416.2 L518.6,414.4 L518.2,414.8 L517.8,413.4 L517.4,414.8 L517.0,415.7 L516.6,415.5 L516.2,413.5 L515.8,415.2 L515.4,413.3 L515.0,414.8 L514.6,414.6 L514.2,413.5 L513.8,414.6 L513.4,413.6 L513.0,413.5 L512.6,414.7 L512.2,413.8 L511.8,414.7 L511.4,415.7 L511.0,415.6 L510.6,414.0 L510.2,414.8 L509.8,415.2 L509.4,413.3 L509.0,414.6 L508.6,414.6 L508.2,415.3 L507.8,414.6 L507.4,415.1 L507.0,414.5 L506.6,414.2 L506.2,415.2 L505.8,415.0 L505.4,415.1 L505.0,413.6 L504.6,415.9 L504.2,413.3 L503.8,415.6 L503.4,415.0 L503.0,413.3 L502.6,416.1 L502.2,415.5 L501.8,414.0 L501.4,413.6 L501.0,414.4 L500.6,414.9 L500.2,414.5 L499.8,413.9 L499.4,413.8 L499.0,415.9 L498.6,415.9 L498.2,414.5 L497.8,413.9 L497.4,415.7 L497.0,413.7 L496.6,415.8 L496.2,415.2 L495.8,416.1 L495.4,414.4 L495.0,416.2 L494.6,413.4 L494.2,414.7 L493.8,416.3 L493.4,416.2 L493.0,413.6 L492.6,413.8 L492.2,416.3 L491.8,415.8 L491.4,414.8 L491.0,413.5 L490.6,416.2 L490.2,414.9 L489.8,414.1 L489.4,413.7 L489.0,414.8 L488.6,414.4 L488.2,415.2 L487.8,413.5 L487.4,416.1 L487.0,415.3 L486.6,415.0 L486.2,413.2 L485.8,413.7 L485.4,414.7 L485.0,416.0 L484.6,414.5 L484.2,415.8 L483.8,414.6 L483.4,416.1 L483.0,413.2 L482.6,413.9 L482.2,415.5 L481.8,413.8 L481.4,414.4 L481.0,416.4 L480.6,416.0 L480.2,414.5 L479.8,414.3 L479.4,415.0 L479.0,414.2 L478.6,416.3 L478.2,414.2 L477.8,414.1 L477.4,414.5 L477.0,415.4 L476.6,413.7 L476.2,413.5 L475.8,415.2 L475.4,415.0 L475.0,414.5 L474.6,413.5 L474.2,413.4 L473.8,415.0 L473.4,415.7 L473.0,413.9 L472.6,414.2 L472.2,413.8 L471.8,415.4 L471.4,414.2 L471.0,413.2 L470.6,413.9 L470.2,415.3 L469.8,415.1 L469.4,414.0 L469.0,413.9 L468.6,413.7 L468.2,414.4 L467.8,413.9 L467.4,415.2 L467.0,415.1 L466.6,413.5 L466.2,416.2 L465.8,415.7 L465.4,414.0 L465.0,414.6 L464.6,416.0 L464.2,414.4 L463.8,416.2 L463.4,415.1 L463.0,416.3 L462.6,413.8 L462.2,413.6 L461.8,414.1 L461.4,413.3 L461.0,416.1 L460.6,415.9 L460.2,415.8 L459.8,414.7 L459.4,413.5 L459.0,416.4 L458.6,415.3 L458.2,415.8 L457.8,413.9 L457.4,414.8 L457.0,416.4 L456.6,414.5 L456.2,414.2 L455.8,415.1 L455.4,416.0 L455.0,413.7 L454.6,414.0 L454.2,414.0 Z" stroke="none" stroke-width="1" fill="#ff0000" />
<line x1="582.8" y1="336" x2="582.8" y2="395.4" stroke="#ffb0b0" stroke-width="0.6" />
<line x1="538.8" y1="384" x2="538.8" y2="414" stroke="#ffb0b0" stroke-width="0.6" />
<line x1="200.5" y1="198" x2="200.5" y2="280" stroke="#5a9ee0" stroke-width="1.0" />
<line x1="200.5" y1="280" x2="200.5" y2="330" stroke="#85b8e4" stroke-width="1.0" />
<line x1="200.5" y1="330" x2="200.5" y2="401" stroke="#a8bde6" stroke-width="1.0" />
<line x1="200.5" y1="401" x2="200.5" y2="410.5" stroke="#777" stroke-width="1.0" />
<line x1="200.5" y1="410.5" x2="200.5" y2="424" stroke="#b0b8e0" stroke-width="1.0" />
<rect x="200.6" y="410" width="1.8" height="1.6" fill="#222" />
<line x1="242.7" y1="213" x2="242.7" y2="239" stroke="#1f8bd2" stroke-width="1.1" />
<path d="M200.5,237.6 L284.6,240.4" stroke="#3d8fd6" stroke-width="1.0" fill="none" />
<path d="M200.5,236.6 L284.6,239.4" stroke="#c04868" stroke-width="0.9" fill="none" />
<line x1="284.5" y1="130.5" x2="284.5" y2="200" stroke="#1f8bd2" stroke-width="1.3" />
<line x1="284.5" y1="200" x2="284.5" y2="240" stroke="#6a4c8c" stroke-width="1.3" />
<path d="M285,242.6 L286.4,250.6 L287.7,255.6 L289.5,261.9 L294.6,268.2 L300.8,274.4 L309.6,281.3 L317.2,286.4 L325.3,288.9 L332,291.4 L338.7,293.2 L355.5,296.3 L368.3,298.8" stroke="#4aa0e0" stroke-width="1.1" fill="none" stroke-linejoin="round"/>
<path d="M325.6,288.5 C326.6,286 326.8,284 326.2,281.5" stroke="#6ab4e8" stroke-width="0.9" fill="none" />
<line x1="369.3" y1="219.4" x2="369.3" y2="303.5" stroke="#5aaae0" stroke-width="1.1" />
<path d="M369.5,301.4 L370.0,301.8 L370.5,300.3 L371.0,301.2 L371.5,301.3 L372.0,301.9 L372.5,300.9 L373.0,301.5 L373.5,301.4 L374.0,302.2 L374.5,301.4 L375.0,302.6 L375.5,301.6 L376.0,301.5 L376.5,302.4 L377.0,302.2 L377.5,301.6 L378.0,302.5 L378.5,301.7 L379.0,303.0 L379.5,302.9 L380.0,303.1 L380.5,302.9 L381.0,302.5 L381.5,302.7 L382.0,302.8 L382.5,303.7 L383.0,302.4 L383.5,303.9 L384.0,302.4 L384.5,302.8 L385.0,303.0 L385.5,304.2 L386.0,303.6 L386.5,303.4 L387.0,304.4 L387.5,303.3 L388.0,303.8 L388.5,304.0 L389.0,304.5 L389.5,304.6 L390.0,304.5 L390.5,304.0 L391.0,304.0 L391.5,303.8 L392.0,305.1 L392.5,304.9 L393.0,305.1 L393.5,304.1 L394.0,304.7 L394.5,305.4 L395.0,305.1 L395.5,304.3 L396.0,305.0 L396.5,305.9 L397.0,304.7 L397.5,304.7 L398.0,305.0 L398.5,305.8 L399.0,306.2 L399.5,304.9 L400.0,305.0 L400.5,305.2 L401.0,305.5 L401.5,305.9 L402.0,305.3 L402.5,305.7 L403.0,305.5 L403.5,307.1 L404.0,306.7 L404.5,305.5 L405.0,307.3 L405.5,305.7 L406.0,306.3 L406.5,307.5 L407.0,307.2 L407.5,307.2 L408.0,306.7 L408.5,306.3 L409.0,307.2 L409.5,306.2 L410.0,306.5 L410.5,306.9 L411.0,306.2 L411.5,307.0 L412.0,307.9 L412.5,307.8 L413.0,307.4 L413.5,307.8 L414.0,307.5 L414.5,306.9 L415.0,307.9 L415.5,307.5 L416.0,308.3 L416.5,308.7 L417.0,307.8 L417.5,308.1 L418.0,308.6 L418.5,307.9 L419.0,307.6 L419.5,308.7 L420.0,309.1 L420.5,308.9 L421.0,308.8 L421.5,309.2 L422.0,308.9 L422.5,308.9 L423.0,308.6 L423.5,308.3 L424.0,309.1 L424.5,308.0 L425.0,308.7 L425.5,309.6 L426.0,309.5 L426.5,309.4 L427.0,308.6 L427.5,309.0 L428.0,309.1 L428.5,309.6 L429.0,309.2 L429.5,309.8 L430.0,310.4 L430.5,308.8 L431.0,309.9 L431.5,310.3 L432.0,309.4 L432.5,309.7 L433.0,310.9 L433.5,308.8 L434.0,310.0 L434.5,309.2 L435.0,310.7 L435.5,311.1 L436.0,310.2 L436.5,309.3 L437.0,310.4 L437.5,310.4 L438.0,310.9 L438.5,310.5 L439.0,310.8 L439.5,311.3 L440.0,310.7 L440.5,310.4 L441.0,311.7 L441.5,310.0 L442.0,311.2 L442.5,310.5 L443.0,311.4 L443.5,309.9 L444.0,312.0 L444.5,310.5 L445.0,309.8 L445.5,310.4 L446.0,310.7 L446.5,309.8 L447.0,310.8 L447.5,310.9 L448.0,311.6 L448.5,310.8 L449.0,310.6 L449.5,310.5 L450.0,311.8 L450.5,312.3 L451.0,311.3 L451.5,310.6 L452.0,312.1 L452.5,311.1 L453.0,310.7 L453.5,310.5 L454.0,312.1 L454.5,312.2 L455.0,311.8 L455.5,311.5 L456.0,311.7 L456.5,310.9 L457.0,312.8 L457.5,311.3 L458.0,312.0 L458.5,312.5 L459.0,312.5 L459.5,311.7 L460.0,311.3 L460.5,312.0 L461.0,310.9 L461.5,312.7 L462.0,311.5 L462.5,312.9 L463.0,311.4 L463.5,311.7 L464.0,311.4 L464.5,311.9 L465.0,311.3 L465.5,310.8 L466.0,312.7 L466.5,311.6 L467.0,311.5 L467.5,311.7 L468.0,312.2 L468.5,312.1 L469.0,312.7 L469.5,312.8 L470.0,312.0 L470.5,313.6 L471.0,313.4 L471.5,311.3 L472.0,313.4 L472.5,313.6 L473.0,313.3 L473.5,311.6 L474.0,313.5 L474.5,313.0 L475.0,311.3 L475.5,311.4 L476.0,313.9 L476.5,313.2 L477.0,312.1 L477.5,311.7 L478.0,311.8 L478.5,312.1 L479.0,313.6 L479.5,312.5 L480.0,312.0 L480.5,314.1 L481.0,313.8 L481.5,312.1 L482.0,314.1 L482.5,313.4 L483.0,313.9 L483.5,313.6 L484.0,314.2 L484.5,314.0 L485.0,314.1 L485.5,312.4 L486.0,313.8 L486.5,313.4 L487.0,314.0 L487.5,313.1 L488.0,314.4 L488.5,313.5 L489.0,312.7 L489.5,312.7 L490.0,312.4 L490.5,313.5 L491.0,312.2 L491.5,313.4 L492.0,312.5 L492.5,313.5 L493.0,313.6 L493.5,313.7 L494.0,314.7 L494.5,312.2 L495.0,314.7 L495.5,313.6 L496.0,313.9 L496.5,314.2 L497.0,314.7 L497.5,313.4 L498.0,313.5 L498.5,315.2 L499.0,312.5 L499.5,314.2 L500.0,314.3 L500.5,312.5 L501.0,314.2 L501.5,314.5 L502.0,315.2 L502.5,313.4 L503.0,315.4 L503.5,314.0 L504.0,314.0 L504.5,315.2 L505.0,312.6 L505.5,314.7 L506.0,314.5 L506.5,313.6 L507.0,315.2 L507.5,313.7 L508.0,314.1 L508.5,314.3 L509.0,315.0 L509.5,313.3 L510.0,314.0 L510.5,314.0 L511.0,314.4 L511.5,315.3 L512.0,313.7 L512.5,315.4 L513.0,314.1 L513.5,314.4 L514.0,313.7 L514.5,314.4 L515.0,315.9 L515.5,314.9 L516.0,315.4 L516.5,314.0 L517.0,313.9 L517.5,313.9 L518.0,314.8 L518.5,315.0 L519.0,315.5 L519.5,313.1 L520.0,315.3 L520.5,315.9 L521.0,314.8 L521.5,313.2 L522.0,314.1 L522.5,313.1 L523.0,313.7 L523.5,316.1 L524.0,315.1 L524.5,315.3 L525.0,315.8 L525.5,316.2 L526.0,315.2 L526.5,315.3 L527.0,315.3 L527.5,315.6 L528.0,315.3 L528.5,315.5 L529.0,314.0 L529.5,315.5 L530.0,314.9 L530.5,315.9 L531.0,313.7 L531.5,314.0 L532.0,313.6 L532.5,316.0 L533.0,316.5 L533.5,315.7 L534.0,314.7 L534.5,316.3 L535.0,316.2 L535.5,315.4 L536.0,314.4 L536.5,314.6 L537.0,315.0 L537.5,314.7 L538.0,315.1 L538.5,315.8 L539.0,316.8 L539.5,313.9 L540.0,315.6 L540.5,313.8 L541.0,314.1 L541.5,316.5 L542.0,315.7 L542.5,316.9 L543.0,315.3 L543.5,313.9 L544.0,315.2 L544.5,315.9 L545.0,317.1 L545.5,317.3 L546.0,315.5 L546.5,315.3 L547.0,314.3 L547.5,316.2 L548.0,314.7 L548.5,314.5 L549.0,314.0 L549.5,314.0 L550.0,316.4 L550.5,314.5 L551.0,317.4 L551.5,314.4 L552.0,317.1 L552.5,314.6 L553.0,314.2 L553.5,316.7 L554.0,315.0 L554.5,316.8 L555.0,314.8 L555.5,314.4 L556.0,317.0 L556.5,316.8 L557.0,317.3 L557.5,316.9 L558.0,314.6 L558.5,316.5 L559.0,316.9 L559.5,316.0 L560.0,317.7 L560.5,315.3 L561.0,317.9 L561.5,317.0 L562.0,314.4 L562.5,314.5 L563.0,316.8 L563.5,317.4 L564.0,314.8 L564.5,315.6 L565.0,317.2 L565.5,315.1 L566.0,317.7 L566.5,316.3 L567.0,314.8 L567.5,315.9 L568.0,316.7 L568.5,316.2 L569.0,317.1 L569.5,315.2 L570.0,317.6 L570.5,316.0 L571.0,317.1 L571.5,317.1 L572.0,316.3 L572.5,316.2 L573.0,317.7 L573.5,318.3 L574.0,317.7 L574.5,316.9 L575.0,315.9 L575.5,315.1 L576.0,318.5 L576.5,317.5 L577.0,318.0 L577.5,316.2 L578.0,317.2 L578.5,318.6 L579.0,318.1 L579.5,317.2 L580.0,316.1 L580.5,316.6 L581.0,318.4 L581.5,316.5 L582.0,317.7 L582.5,317.4 L583.0,318.5 L583.5,318.2 L584.0,316.2 L584.5,315.1 L585.0,316.1 L585.5,316.8 L586.0,317.4 L586.5,318.4 L587.0,318.7 L587.5,315.4 L588.0,318.5 L588.5,318.4 L589.0,318.7 L589.5,317.5 L590.0,316.4 L590.5,318.7 L591.0,318.5 L591.5,318.0 L592.0,319.0 L592.5,316.7 L593.0,315.7 L593.5,317.6 L594.0,318.6 L594.5,316.2 L595.0,318.4 L595.5,319.2 L596.0,316.4 L596.5,317.9 L597.0,318.2 L597.5,317.4 L598.0,316.4 L598.5,316.6 L599.0,318.6 L599.5,318.8 L600.0,317.5 L600.5,316.0 L601.0,318.9 L601.5,318.8 L602.0,316.6 L602.5,318.0 L603.0,319.3 L603.5,319.3 L604.0,317.9 L604.5,317.7 L605.0,318.2 L605.5,316.6 L606.0,316.6 L606.5,316.6 L607.0,318.7 L607.5,317.3 L608.0,318.2 L608.5,317.5 L609.0,318.0 L609.5,316.5 L610.0,316.1 L610.5,320.1 L611.0,317.5 L611.5,316.4 L612.0,318.6 L612.5,319.3 L613.0,316.7 L613.5,318.5 L614.0,317.5 L614.5,318.2 L615.0,316.2 L615.5,316.2" stroke="#1c84d0" stroke-width="1.4" fill="none" />
<path d="M288.4,250 L408.3,252" stroke="#f26b6b" stroke-width="1.0" fill="none" />
<path d="M408.3,252 L410.8,244 L411.2,271.5 L453.6,271.5 L453.8,245.5 L454.4,330" stroke="#f26b6b" stroke-width="1.0" fill="none" />
<line x1="408.4" y1="131" x2="408.4" y2="201.8" stroke="#555" stroke-width="1.0" />
<line x1="408.4" y1="206.5" x2="408.4" y2="423" stroke="#f22a2a" stroke-width="1.4" />
<line x1="411.6" y1="247" x2="411.6" y2="258" stroke="#7a5050" stroke-width="0.9" />
<line x1="242.6" y1="233.5" x2="242.6" y2="239" stroke="#3a3a5a" stroke-width="0.9" />
<line x1="284.6" y1="233" x2="284.6" y2="241" stroke="#5a2a4a" stroke-width="1.0" />
<line x1="242.6" y1="239" x2="242.6" y2="243.5" stroke="#333" stroke-width="0.9" />
<line x1="240.4" y1="243.5" x2="244.79999999999998" y2="243.5" stroke="#333" stroke-width="0.9" />
<line x1="284.9" y1="241" x2="284.9" y2="245.5" stroke="#333" stroke-width="0.9" />
<line x1="282.7" y1="245.5" x2="287.09999999999997" y2="245.5" stroke="#333" stroke-width="0.9" />
<line x1="411.8" y1="253.5" x2="411.8" y2="258.0" stroke="#333" stroke-width="0.9" />
<line x1="409.6" y1="258.0" x2="414.0" y2="258.0" stroke="#333" stroke-width="0.9" />
<line x1="288.4" y1="249.6" x2="325.2" y2="250.5" stroke="#f3a327" stroke-width="1.4" />
<line x1="288.4" y1="263.2" x2="325.2" y2="291.2" stroke="#f3a327" stroke-width="1.4" />
<line x1="491.4" y1="314.2" x2="615.3" y2="317.9" stroke="#c4a02e" stroke-width="1.4" />
<line x1="491.4" y1="383.4" x2="615.3" y2="381" stroke="#f0b020" stroke-width="1.4" />
<ellipse cx="288.4" cy="249.6" rx="3.1" ry="3.8" fill="none" stroke="#4a4ae8" stroke-width="0.9"/>
<ellipse cx="325.2" cy="250.5" rx="3.1" ry="3.8" fill="none" stroke="#4a4ae8" stroke-width="0.9"/>
<ellipse cx="491.4" cy="383.4" rx="3.1" ry="3.8" fill="none" stroke="#6a2aa0" stroke-width="0.9"/>
<ellipse cx="615.3" cy="381" rx="3.1" ry="3.8" fill="none" stroke="#6a2aa0" stroke-width="0.9"/>
<circle cx="288.4" cy="249.6" r="1.6" fill="#e6dc3a" stroke="#8a7a10" stroke-width="0.5" />
<circle cx="325.2" cy="250.5" r="1.6" fill="#e6dc3a" stroke="#8a7a10" stroke-width="0.5" />
<circle cx="288.4" cy="263.2" r="1.6" fill="#e6dc3a" stroke="#8a7a10" stroke-width="0.5" />
<circle cx="325.2" cy="291.2" r="1.6" fill="#e6dc3a" stroke="#8a7a10" stroke-width="0.5" />
<circle cx="408.4" cy="306.8" r="1.6" fill="#e6dc3a" stroke="#8a7a10" stroke-width="0.5" />
<circle cx="408.4" cy="252" r="1.6" fill="#e6dc3a" stroke="#8a7a10" stroke-width="0.5" />
<circle cx="491.4" cy="383.4" r="1.6" fill="#e6dc3a" stroke="#8a7a10" stroke-width="0.5" />
<circle cx="615.3" cy="381" r="1.6" fill="#e6dc3a" stroke="#8a7a10" stroke-width="0.5" />
<circle cx="491.4" cy="314.2" r="1.6" fill="#e6dc3a" stroke="#8a7a10" stroke-width="0.5" />
<rect x="616.4" y="374.5" width="3.8" height="13" fill="#ffffff" />
<circle cx="521.8" cy="150.9" r="3.6" fill="#888" />
<line x1="522" y1="150.9" x2="595" y2="150.9" stroke="#19a6de" stroke-width="2.6" />
<circle cx="603.9" cy="150.9" r="4.7" fill="#888" />
<path d="M601.9,148.9 L605.9,152.9 M605.9,148.9 L601.9,152.9" stroke="#fff" stroke-width="1.1" fill="none" />
<line x1="603.9" y1="161.4" x2="603.9" y2="246" stroke="#19a6de" stroke-width="2.6" />
<circle cx="603.9" cy="247.5" r="3.6" fill="#888" />
<rect x="589.2" y="165.4" width="7.8" height="6.2" fill="#888" rx="0.6" />
<path d="M590.6,165.6 L590.6,163.4 a2.3,2.3 0 0,1 4.6,0 L595.2,164" stroke="#888" stroke-width="1.1" fill="none" />
<circle cx="593.1" cy="168.4" r="0.8" fill="#fff" />
<text x="528.9" y="170.08" font-size="6.6" fill="#555" >Pos:</text>
<text x="546.5" y="170.08" font-size="6.6" fill="#555" textLength="30.2" lengthAdjust="spacingAndGlyphs" >4.9955 Km</text>
<text x="528.9" y="180.18" font-size="6.6" fill="#555" textLength="17.6" lengthAdjust="spacingAndGlyphs" >Slope:</text>
<text x="546.5" y="180.18" font-size="6.6" fill="#555" textLength="36.5" lengthAdjust="spacingAndGlyphs" >0.195 dB/km</text>
<text x="528.9" y="190.28" font-size="6.6" fill="#555" >Loss:</text>
<text x="546.5" y="190.28" font-size="6.6" fill="#555" textLength="29" lengthAdjust="spacingAndGlyphs" >27.107 dB</text>
<text x="528.9" y="199.58" font-size="6.6" fill="#555" >Refl:</text>
<text x="546.5" y="199.58" font-size="6.6" fill="#555" textLength="24" lengthAdjust="spacingAndGlyphs" >-62.2 dB</text>
<rect x="222.1" y="347.7" width="54.9" height="64.1" fill="none" stroke="#f07070" stroke-width="0.9" />
<circle cx="222.1" cy="347.7" r="0.9" fill="#e02020" />
<circle cx="277" cy="347.7" r="0.9" fill="#e02020" />
<circle cx="222.1" cy="411.8" r="0.9" fill="#e02020" />
<circle cx="277" cy="411.8" r="0.9" fill="#e02020" />
<path d="M222.3,370.8 L232.8,371.5" stroke="#3a5ea0" stroke-width="1.0" fill="none" />
<line x1="227.1" y1="362.8" x2="227.1" y2="371" stroke="#5a4a9a" stroke-width="0.9" />
<line x1="232.8" y1="348" x2="232.8" y2="372" stroke="#5fb0e6" stroke-width="1.0" />
<path d="M232.8,373.5 L249.2,374 L249.4,378.3 L255.3,378.3 L255.5,370.7 L255.5,391" stroke="#f26b6b" stroke-width="0.8" fill="none" />
<path d="M233.2,372 C234,378 237,382 244,384.8 C247,385.6 249,386 252,386.4" stroke="#1f8bd2" stroke-width="1.0" fill="none" />
<path d="M252.0,387.2 L252.5,387.0 L253.0,386.4 L253.5,386.6 L254.0,386.1 L254.5,387.0 L255.0,386.5 L255.5,387.3 L256.0,387.1 L256.5,387.2 L257.0,387.5 L257.5,386.4 L258.0,386.0 L258.5,386.3 L259.0,386.3 L259.5,386.2 L260.0,386.2 L260.5,387.0 L261.0,387.6 L261.5,386.9 L262.0,387.8 L262.5,387.7 L263.0,386.4 L263.5,387.3 L264.0,387.0 L264.5,386.6 L265.0,388.0 L265.5,386.9 L266.0,387.4 L266.5,387.6 L267.0,388.1 L267.5,387.7 L268.0,387.3 L268.5,387.4 L269.0,386.9 L269.5,388.3 L270.0,388.3 L270.5,387.1 L271.0,386.9 L271.5,387.3 L272.0,387.4 L272.5,388.4 L273.0,388.4 L273.5,388.3 L274.0,387.1 L274.5,388.3 L275.0,388.2 L275.5,388.1 L276.0,388.7 L276.5,387.3 L277.0,387.4" stroke="#1c84d0" stroke-width="1.1" fill="none" />
<line x1="244" y1="365" x2="244" y2="385" stroke="#3f98d8" stroke-width="0.9" />
<path d="M255.1,392.0 L255.6,392.3 L256.1,391.9 L256.6,391.3 L257.1,391.7 L257.6,392.0 L258.1,391.0 L258.6,391.3 L259.1,391.2 L259.6,391.0 L260.1,391.6 L260.6,391.1 L261.1,391.2 L261.6,391.0 L262.1,391.9 L262.6,390.8 L263.1,391.9 L263.6,391.1 L264.1,390.9 L264.6,392.3 L265.1,391.2 L265.6,392.3 L266.1,392.2 L266.6,392.2 L267.1,391.0 L267.6,391.5 L268.1,391.0 L268.6,392.3 L269.1,392.1 L269.6,391.8 L270.1,391.5 L270.6,391.3 L271.1,392.1 L271.6,391.6 L272.1,391.8 L272.6,391.0 L273.1,391.2 L273.6,390.9 L274.1,391.9 L274.6,391.7 L275.1,391.0 L275.6,392.2 L276.1,391.2 L276.6,391.5 L277,409.5 L255.1,409.5 Z" stroke="none" stroke-width="1" fill="#ff0000" />
<path d="M240.5,418.6 L242.2,415.8 L243.1,420.6 L245.6,421.3" stroke="#222" stroke-width="1.1" fill="none" />
<path d="M283.6,418.2 L283.8,415.2 L287.4,415.2 L287.4,421.8" stroke="#222" stroke-width="1.1" fill="none" />
<path d="M199.6,411 L201.8,411" stroke="#222" stroke-width="1.2" fill="none" />
<line x1="195.8" y1="429.4" x2="787" y2="429.4" stroke="#dedede" stroke-width="1.0" />
<line x1="620.6" y1="124.8" x2="620.6" y2="429.4" stroke="#d8d8d8" stroke-width="0.9" />
<rect x="621" y="126" width="28.6" height="14.8" fill="#16a5de" />
<text x="624.2" y="135.92" font-size="7.0" fill="#fff" textLength="21.5" lengthAdjust="spacingAndGlyphs" >Events</text>
<text x="654" y="135.92" font-size="7.0" fill="#19a2de" textLength="25" lengthAdjust="spacingAndGlyphs" >Common</text>
<text x="688.6" y="135.92" font-size="7.0" fill="#19a2de" textLength="23.8" lengthAdjust="spacingAndGlyphs" >Analysis</text>
<text x="721" y="135.92" font-size="7.0" fill="#19a2de" textLength="27.4" lengthAdjust="spacingAndGlyphs" >Summary</text>
<rect x="621" y="140.8" width="165.8" height="19.7" fill="#2f5153" />
<text x="624" y="153.28" font-size="6.9" fill="#fff" textLength="43" lengthAdjust="spacingAndGlyphs" ># TypeDistance</text>
<text x="682.3" y="153.28" font-size="6.9" fill="#fff" textLength="12.5" lengthAdjust="spacingAndGlyphs" >Loss</text>
<text x="711.6" y="148.28" font-size="6.9" fill="#fff" textLength="32" lengthAdjust="spacingAndGlyphs" >Reflectance</text>
<text x="711.6" y="158.28" font-size="6.9" fill="#fff" textLength="15.5" lengthAdjust="spacingAndGlyphs" >Slope</text>
<text x="745.9" y="153.28" font-size="6.9" fill="#fff" textLength="29.3" lengthAdjust="spacingAndGlyphs" >Cumul los:</text>
<rect x="621" y="177" width="165.4" height="16.2" fill="#e9e9e9" />
<rect x="621" y="209.4" width="165.4" height="16.3" fill="#e9e9e9" />
<line x1="621.8" y1="160.5" x2="621.8" y2="242.1" stroke="#7fd87f" stroke-width="1.3" />
<text x="625.2" y="170.92" font-size="7.0" fill="#333" >0</text>
<path d="M633.6,173.2 L633.6,163.4 L636.2,163.4" stroke="#222" stroke-width="1.2" fill="none" />
<text x="643.3" y="167.98" font-size="6.6" fill="#333" textLength="32" lengthAdjust="spacingAndGlyphs" >BeginOfFiber</text>
<text x="643.3" y="173.62" font-size="5.6" fill="#666" textLength="21.5" lengthAdjust="spacingAndGlyphs" >0.0000 Km</text>
<text x="711.6" y="173.89" font-size="5.8" fill="#666" textLength="24.2" lengthAdjust="spacingAndGlyphs" >-46.017 dB</text>
<text x="745.9" y="173.89" font-size="5.8" fill="#666" textLength="20" lengthAdjust="spacingAndGlyphs" >0.000 dB</text>
<text x="775.5" y="165.67" font-size="5.2" fill="#333" textLength="6" lengthAdjust="spacingAndGlyphs" >LS</text>
<text x="775.8" y="171.47" font-size="5.2" fill="#333" textLength="4.6" lengthAdjust="spacingAndGlyphs" >A</text>
<line x1="631.6" y1="185.2" x2="641.4" y2="185.2" stroke="#222" stroke-width="1.2" />
<line x1="631.6" y1="183.6" x2="631.6" y2="186.79999999999998" stroke="#222" stroke-width="1.0" />
<line x1="641.4" y1="183.6" x2="641.4" y2="186.79999999999998" stroke="#222" stroke-width="1.0" />
<text x="643.2" y="184.22" font-size="7.0" fill="#333" textLength="33.5" lengthAdjust="spacingAndGlyphs" >Fiber section</text>
<text x="643.2" y="189.76" font-size="6.0" fill="#777" textLength="25.8" lengthAdjust="spacingAndGlyphs" >(1.0170 Km)</text>
<text x="682.1" y="189.89" font-size="5.8" fill="#666" textLength="20.5" lengthAdjust="spacingAndGlyphs" >0.203 dB</text>
<text x="711.6" y="189.89" font-size="5.8" fill="#666" textLength="23.5" lengthAdjust="spacingAndGlyphs" >0.2 dB/km</text>
<text x="745.9" y="189.89" font-size="5.8" fill="#666" textLength="20" lengthAdjust="spacingAndGlyphs" >0.203 dB</text>
<text x="625.2" y="203.52" font-size="7.0" fill="#333" >1</text>
<path d="M631.5,203.3 L634.2,203.3 L634.2,197.2 L637.4,197.2 L637.4,204.6 L640.6,204.6" stroke="#222" stroke-width="1.2" fill="none" />
<text x="643.3" y="201.05" font-size="6.8" fill="#333" textLength="26" lengthAdjust="spacingAndGlyphs" >Reflective</text>
<text x="643.3" y="206.42" font-size="5.6" fill="#666" textLength="21.5" lengthAdjust="spacingAndGlyphs" >1.0170 Km</text>
<text x="682.1" y="206.69" font-size="5.8" fill="#666" textLength="20.5" lengthAdjust="spacingAndGlyphs" >0.100 dB</text>
<text x="711.6" y="206.69" font-size="5.8" fill="#666" textLength="24" lengthAdjust="spacingAndGlyphs" >-51.416 dB</text>
<text x="745.9" y="206.69" font-size="5.8" fill="#666" textLength="20" lengthAdjust="spacingAndGlyphs" >0.303 dB</text>
<text x="775.5" y="198.27" font-size="5.2" fill="#333" textLength="6" lengthAdjust="spacingAndGlyphs" >LS</text>
<line x1="631.6" y1="217.5" x2="641.4" y2="217.5" stroke="#222" stroke-width="1.2" />
<line x1="631.6" y1="215.9" x2="631.6" y2="219.1" stroke="#222" stroke-width="1.0" />
<line x1="641.4" y1="215.9" x2="641.4" y2="219.1" stroke="#222" stroke-width="1.0" />
<text x="643.2" y="216.72" font-size="7.0" fill="#333" textLength="33.5" lengthAdjust="spacingAndGlyphs" >Fiber section</text>
<text x="643.2" y="222.36" font-size="6.0" fill="#777" textLength="25.8" lengthAdjust="spacingAndGlyphs" >(1.0093 Km)</text>
<text x="682.1" y="222.69" font-size="5.8" fill="#666" textLength="20.5" lengthAdjust="spacingAndGlyphs" >0.200 dB</text>
<text x="711.6" y="222.69" font-size="5.8" fill="#666" textLength="28.6" lengthAdjust="spacingAndGlyphs" >0.198 dB/km</text>
<text x="745.9" y="222.69" font-size="5.8" fill="#666" textLength="20" lengthAdjust="spacingAndGlyphs" >0.503 dB</text>
<text x="625.2" y="236.32" font-size="7.0" fill="#333" >2</text>
<path d="M632,233 L635.2,233 L635.2,228.6 L638.2,228.6 L638.2,238.4" stroke="#222" stroke-width="1.2" fill="none" />
<text x="643.3" y="233.25" font-size="6.8" fill="#333" textLength="26.8" lengthAdjust="spacingAndGlyphs" >EndOfFiber</text>
<text x="643.3" y="239.42" font-size="5.6" fill="#666" textLength="21.5" lengthAdjust="spacingAndGlyphs" >2.0264 Km</text>
<text x="711.6" y="239.69" font-size="5.8" fill="#666" textLength="24.5" lengthAdjust="spacingAndGlyphs" >-15.626 dB</text>
<text x="745.9" y="239.69" font-size="5.8" fill="#666" textLength="20" lengthAdjust="spacingAndGlyphs" >0.503 dB</text>
<text x="775.5" y="231.27" font-size="5.2" fill="#333" textLength="6" lengthAdjust="spacingAndGlyphs" >LS</text>
<text x="775.8" y="237.07" font-size="5.2" fill="#333" textLength="4.6" lengthAdjust="spacingAndGlyphs" >B</text>
<rect x="195.8" y="435.6" width="592.2" height="15.2" fill="#d5d5d5" />
<line x1="393" y1="435.6" x2="393" y2="466" stroke="#e0e0e0" stroke-width="0.8" />
<line x1="590.5" y1="435.6" x2="590.5" y2="466" stroke="#e0e0e0" stroke-width="0.8" />
<line x1="195.8" y1="450.8" x2="788" y2="450.8" stroke="#e6e6e6" stroke-width="0.6" />
<text x="293.5" y="445.68" font-size="6.9" fill="#333" font-weight="bold" text-anchor="middle" >Date</text>
<text x="491.7" y="445.68" font-size="6.9" fill="#333" font-weight="bold" text-anchor="middle" >Location</text>
<text x="689" y="445.68" font-size="6.9" fill="#333" font-weight="bold" text-anchor="middle" >Type</text>
<text x="263.9" y="460.78" font-size="6.6" fill="#333" textLength="61" lengthAdjust="spacingAndGlyphs" >01/30/2017 13:18:04</text>
<text x="476.5" y="460.78" font-size="6.6" fill="#333" textLength="30.8" lengthAdjust="spacingAndGlyphs" >2.0264 Km</text>
<text x="673.9" y="460.78" font-size="6.6" fill="#333" textLength="31.4" lengthAdjust="spacingAndGlyphs" >Fiber Break</text>
</svg></body></html>
